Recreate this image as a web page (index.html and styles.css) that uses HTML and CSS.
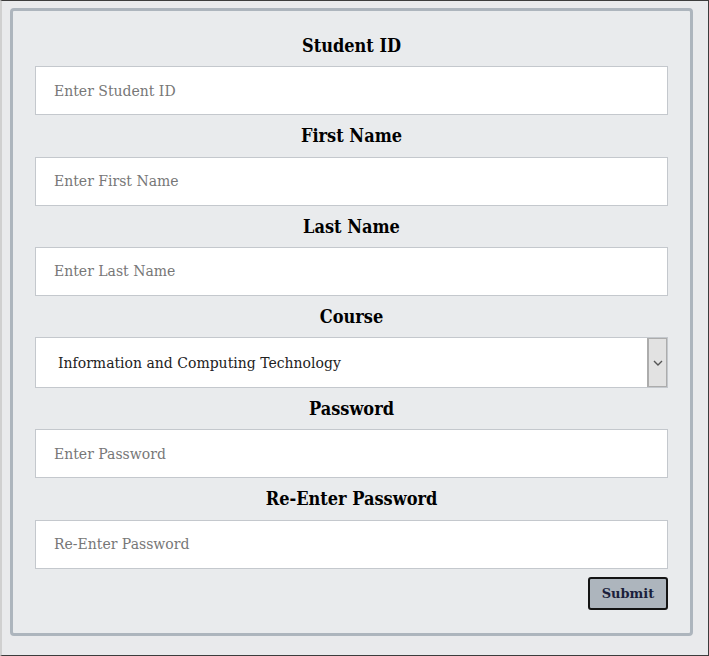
FILE: index.html
```html
<!DOCTYPE html>
<html lang="en">
<head>
<meta charset="utf-8">
<title>Student Registration</title>
<link rel="stylesheet" href="styles.css">
</head>
<body>
<form class="card">
  <label class="lbl" for="sid">Student ID</label>
  <input class="field" id="sid" type="text" placeholder="Enter Student ID">

  <label class="lbl" for="fname">First Name</label>
  <input class="field" id="fname" type="text" placeholder="Enter First Name">

  <label class="lbl" for="lname">Last Name</label>
  <input class="field" id="lname" type="text" placeholder="Enter Last Name">

  <label class="lbl" for="course">Course</label>
  <div class="select-wrap">
    <select class="select" id="course">
      <option>Information and Computing Technology</option>
    </select>
    <span class="arrow"><svg width="10" height="6" viewBox="0 0 10 6"><path d="M1 1 L5 5 L9 1" fill="none" stroke="#555" stroke-width="1.4"/></svg></span>
  </div>

  <label class="lbl" for="pw">Password</label>
  <input class="field" id="pw" type="password" placeholder="Enter Password">

  <label class="lbl" for="pw2">Re-Enter Password</label>
  <input class="field" id="pw2" type="password" placeholder="Re-Enter Password">

  <div class="actions">
    <button class="submit" type="button">Submit</button>
  </div>
</form>
</body>
</html>
```
FILE: styles.css
```css
html {
  margin: 0;
  background: #e9eaec;
}
body {
  margin: 0;
  box-sizing: border-box;
  width: 709px;
  height: 656px;
  overflow: hidden;
  background: #e9eaec;
  border-top: 1px solid #3c3c3c;
  border-right: 1px solid #3c3c3c;
  border-bottom: 1px solid #3c3c3c;
  border-left: 2px solid #d0d0d0;
  font-family: "DejaVu Serif", serif;
}
.card {
  box-sizing: border-box;
  width: 683px;
  margin: 7px 0 0 8px;
  border: 3px solid #adb5bd;
  border-radius: 4px;
  padding: 14px 22px 23px;
  display: flex;
  flex-direction: column;
  background: #e9ebed;
}
.lbl {
  display: block;
  height: 41.3px;
  line-height: 41px;
  text-align: center;
  font-weight: bold;
  font-size: 18px;
  font-stretch: condensed;
  color: #000;
}
.field {
  box-sizing: border-box;
  height: 49px;
  margin: 0;
  border: 1px solid #c4c8cd;
  border-radius: 0;
  padding: 0 18px;
  font-family: "DejaVu Serif", serif;
  font-size: 14px;
  background: #fff;
  outline: none;
}
.field::placeholder {
  color: #777;
}
.select-wrap {
  display: flex;
  box-sizing: border-box;
  height: 51px;
  border: 1px solid #c4c8cd;
  background: #fff;
}
.select {
  flex: 1;
  appearance: none;
  -webkit-appearance: none;
  border: 0;
  margin: 0;
  background: transparent;
  font-family: "DejaVu Serif", serif;
  font-size: 14px;
  color: #222;
  padding: 0 0 0 22px;
  outline: none;
}
.arrow {
  width: 20px;
  box-sizing: border-box;
  border: 1px solid #acacac;
  border-left-width: 2px;
  background: #e2e2e2;
  display: flex;
  align-items: center;
  justify-content: center;
}
.actions {
  display: flex;
  justify-content: flex-end;
  margin-top: 8px;
}
.submit {
  box-sizing: border-box;
  width: 80px;
  height: 33px;
  border: 2px solid #141414;
  border-radius: 3px;
  background: #adb5bd;
  font-family: "DejaVu Serif", serif;
  font-weight: bold;
  font-size: 13px;
  color: #1b1f3b;
  padding: 0;
}
```
